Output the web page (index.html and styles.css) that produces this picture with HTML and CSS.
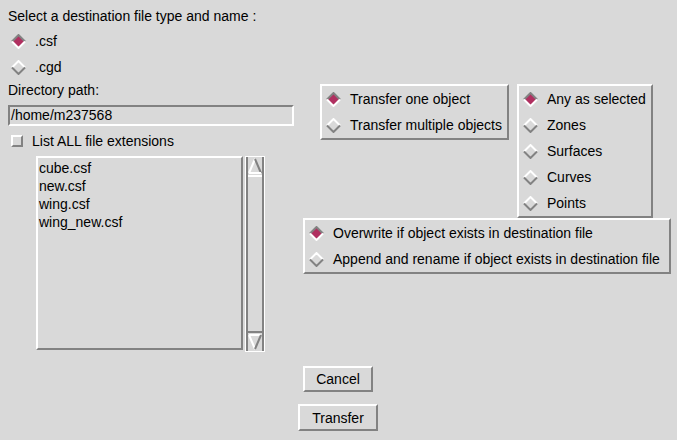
FILE: index.html
```html
<!DOCTYPE html>
<html>
<head>
<meta charset="utf-8">
<title>Transfer</title>
<link rel="stylesheet" href="styles.css">
</head>
<body>
<div class="app">
  <div class="left">
    <div class="title">Select a destination file type and name :</div>
    <div class="radios-plain">
      <div class="radio on"><svg class="dia" viewBox="0 0 15 15"><polygon class="fill" points="7.5,1 14,7.5 7.5,14 1,7.5"/><polyline class="upper" points="1,7.5 7.5,1 14,7.5"/><polyline class="lower" points="1,7.5 7.5,14 14,7.5"/></svg><span>.csf</span></div>
      <div class="radio"><svg class="dia" viewBox="0 0 15 15"><polygon class="fill" points="7.5,1 14,7.5 7.5,14 1,7.5"/><polyline class="upper" points="1,7.5 7.5,1 14,7.5"/><polyline class="lower" points="1,7.5 7.5,14 14,7.5"/></svg><span>.cgd</span></div>
    </div>
    <div class="label">Directory path:</div>
    <div class="entry">/home/m237568</div>
    <div class="check-row"><span class="checkbox"></span><span>List ALL file extensions</span></div>
    <div class="list-wrap">
      <div class="listbox">
        <div class="item">cube.csf</div>
        <div class="item">new.csf</div>
        <div class="item">wing.csf</div>
        <div class="item">wing_new.csf</div>
      </div>
      <div class="scrollbar">
        <div class="sb-inner">
          <svg class="arrow" viewBox="0 0 14 16"><polyline class="lt" points="1,15 7,1"/><polyline class="dk" points="7,1 13,15"/><polyline class="lt" points="1,15 13,15"/></svg>
          <div class="thumb"></div>
          <svg class="arrow" viewBox="0 0 14 16"><polyline class="lt" points="1,1 13,1"/><polyline class="lt" points="1,1 7,15"/><polyline class="dk" points="7,15 13,1"/></svg>
        </div>
      </div>
    </div>
  </div>
  <div class="right">
    <div class="groups-row">
      <div class="group">
        <div class="radio on"><svg class="dia" viewBox="0 0 15 15"><polygon class="fill" points="7.5,1 14,7.5 7.5,14 1,7.5"/><polyline class="upper" points="1,7.5 7.5,1 14,7.5"/><polyline class="lower" points="1,7.5 7.5,14 14,7.5"/></svg><span>Transfer one object</span></div>
        <div class="radio"><svg class="dia" viewBox="0 0 15 15"><polygon class="fill" points="7.5,1 14,7.5 7.5,14 1,7.5"/><polyline class="upper" points="1,7.5 7.5,1 14,7.5"/><polyline class="lower" points="1,7.5 7.5,14 14,7.5"/></svg><span>Transfer multiple objects</span></div>
      </div>
      <div class="group">
        <div class="radio on"><svg class="dia" viewBox="0 0 15 15"><polygon class="fill" points="7.5,1 14,7.5 7.5,14 1,7.5"/><polyline class="upper" points="1,7.5 7.5,1 14,7.5"/><polyline class="lower" points="1,7.5 7.5,14 14,7.5"/></svg><span>Any as selected</span></div>
        <div class="radio"><svg class="dia" viewBox="0 0 15 15"><polygon class="fill" points="7.5,1 14,7.5 7.5,14 1,7.5"/><polyline class="upper" points="1,7.5 7.5,1 14,7.5"/><polyline class="lower" points="1,7.5 7.5,14 14,7.5"/></svg><span>Zones</span></div>
        <div class="radio"><svg class="dia" viewBox="0 0 15 15"><polygon class="fill" points="7.5,1 14,7.5 7.5,14 1,7.5"/><polyline class="upper" points="1,7.5 7.5,1 14,7.5"/><polyline class="lower" points="1,7.5 7.5,14 14,7.5"/></svg><span>Surfaces</span></div>
        <div class="radio"><svg class="dia" viewBox="0 0 15 15"><polygon class="fill" points="7.5,1 14,7.5 7.5,14 1,7.5"/><polyline class="upper" points="1,7.5 7.5,1 14,7.5"/><polyline class="lower" points="1,7.5 7.5,14 14,7.5"/></svg><span>Curves</span></div>
        <div class="radio"><svg class="dia" viewBox="0 0 15 15"><polygon class="fill" points="7.5,1 14,7.5 7.5,14 1,7.5"/><polyline class="upper" points="1,7.5 7.5,1 14,7.5"/><polyline class="lower" points="1,7.5 7.5,14 14,7.5"/></svg><span>Points</span></div>
      </div>
    </div>
    <div class="group group-wide">
      <div class="radio on"><svg class="dia" viewBox="0 0 15 15"><polygon class="fill" points="7.5,1 14,7.5 7.5,14 1,7.5"/><polyline class="upper" points="1,7.5 7.5,1 14,7.5"/><polyline class="lower" points="1,7.5 7.5,14 14,7.5"/></svg><span>Overwrite if object exists in destination file</span></div>
      <div class="radio"><svg class="dia" viewBox="0 0 15 15"><polygon class="fill" points="7.5,1 14,7.5 7.5,14 1,7.5"/><polyline class="upper" points="1,7.5 7.5,1 14,7.5"/><polyline class="lower" points="1,7.5 7.5,14 14,7.5"/></svg><span>Append and rename if object exists in destination file</span></div>
    </div>
    <div class="buttons">
      <div class="btn btn-cancel">Cancel</div>
      <div class="btn btn-transfer">Transfer</div>
    </div>
  </div>
</div>
</body>
</html>
```

FILE: styles.css
```css
html, body {
  margin: 0;
  padding: 0;
}
body {
  background: #d9d9d9;
  font-family: "Liberation Sans", Arial, sans-serif;
  font-size: 14px;
  line-height: 16px;
  color: #000;
  width: 677px;
  height: 440px;
  overflow: hidden;
}
.app {
  display: flex;
  align-items: flex-start;
}
.left {
  width: 290px;
  padding: 8px 0 0 8px;
  display: flex;
  flex-direction: column;
}
.title {
  height: 16px;
  white-space: nowrap;
}
.radios-plain {
  margin-top: 4px;
  padding-left: 3px;
}
.radio {
  display: flex;
  align-items: center;
  gap: 9px;
  height: 26px;
  white-space: nowrap;
}
.dia {
  width: 15px;
  height: 15px;
  flex: none;
}
.dia .fill {
  fill: none;
}
.dia .upper {
  fill: none;
  stroke: #ffffff;
  stroke-width: 2;
}
.dia .lower {
  fill: none;
  stroke: #828282;
  stroke-width: 2;
}
.radio.on .dia .fill {
  fill: #b03060;
}
.radio.on .dia .upper {
  stroke: #828282;
}
.radio.on .dia .lower {
  stroke: #ffffff;
}
.label {
  margin-top: 2px;
  height: 16px;
}
.entry {
  margin-top: 7px;
  width: 286px;
  height: 21px;
  box-sizing: border-box;
  border: 2px solid;
  border-color: #828282 #ffffff #ffffff #828282;
  padding-left: 1px;
  line-height: 17px;
}
.check-row {
  margin-top: 4px;
  height: 22px;
  display: flex;
  align-items: center;
  gap: 9px;
  padding-left: 3px;
}
.checkbox {
  width: 12px;
  height: 12px;
  box-sizing: border-box;
  border: 2px solid;
  border-color: #ffffff #828282 #828282 #ffffff;
}
.list-wrap {
  margin-top: 4px;
  padding-left: 28px;
  display: flex;
  gap: 2px;
  height: 194px;
}
.listbox {
  width: 207px;
  height: 194px;
  box-sizing: border-box;
  border: 2px solid;
  border-color: #ffffff #828282 #828282 #ffffff;
  padding: 1px 0 0 1px;
}
.item {
  line-height: 18px;
  white-space: nowrap;
}
.scrollbar {
  width: 20px;
  height: 196px;
  box-sizing: border-box;
  border: 1px solid #ffffff;
  display: flex;
}
.sb-inner {
  flex: 1;
  display: flex;
  flex-direction: column;
  align-items: center;
  border-left: 2px solid #828282;
  border-right: 2px solid #828282;
  padding: 1px 0;
}
.arrow {
  width: 14px;
  height: 16px;
  flex: none;
}
.arrow .lt {
  fill: none;
  stroke: #ffffff;
  stroke-width: 2;
}
.arrow .dk {
  fill: none;
  stroke: #828282;
  stroke-width: 2;
}
.thumb {
  flex: 1;
  align-self: stretch;
  border-top: 2px solid #ffffff;
  border-bottom: 2px solid #828282;
  margin: 1px 0;
}
.right {
  padding-top: 84px;
  display: flex;
  flex-direction: column;
  align-items: flex-start;
}
.groups-row {
  display: flex;
  align-items: flex-start;
  gap: 8px;
  margin-left: 22px;
}
.group {
  display: flex;
  flex-direction: column;
  border: 2px solid;
  border-color: #ffffff #828282 #828282 #ffffff;
  padding: 0 5px 0 4px;
}
.group-wide {
  margin-left: 5px;
  padding-right: 9px;
}
.buttons {
  margin-top: 92px;
  width: 80px;
  display: flex;
  flex-direction: column;
  align-items: center;
  gap: 12px;
}
.btn {
  box-sizing: border-box;
  border: 2px solid;
  border-color: #ffffff #828282 #828282 #ffffff;
  display: flex;
  align-items: center;
  justify-content: center;
}
.btn-cancel {
  width: 70px;
  height: 26px;
}
.btn-transfer {
  width: 80px;
  height: 27px;
}
```
